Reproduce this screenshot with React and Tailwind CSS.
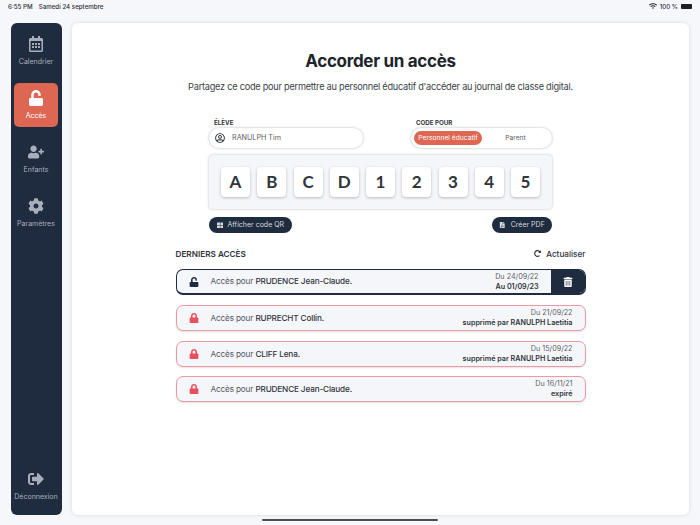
import { FaRegCalendarAlt, FaUnlock, FaUserPlus, FaCog, FaSignOutAlt, FaTrashAlt, FaRedoAlt, FaFilePdf, FaThLarge, FaLock, FaRegUserCircle, FaWifi } from 'react-icons/fa';

const navItems = [
  { label: 'Calendrier', Icon: FaRegCalendarAlt },
  { label: 'Accès', Icon: FaUnlock, active: true },
  { label: 'Enfants', Icon: FaUserPlus },
  { label: 'Paramètres', Icon: FaCog },
];

const codeChars = ['A', 'B', 'C', 'D', '1', '2', '3', '4', '5'];

const expired = [
  { name: 'RUPRECHT', first: 'Collin.', date: 'Du 21/09/22', status: 'supprimé par RANULPH Laetitia' },
  { name: 'CLIFF', first: 'Lena.', date: 'Du 15/09/22', status: 'supprimé par RANULPH Laetitia' },
  { name: 'PRUDENCE', first: 'Jean-Claude.', date: 'Du 16/11/21', status: 'expiré' },
];

const NavItem = ({ label, Icon, active }) => (
  <div className={`h-[44px] w-[44px] rounded-[5px] flex flex-col items-center justify-center ${active ? 'bg-[#dd6753] text-white' : 'text-[#a9afba]'}`}>
    <Icon className="text-[16px]" />
    <span className="mt-[5px] text-[7px] leading-[10px]">{label}</span>
  </div>
);

const App = () => {
  return (
    <div className="relative h-[525px] w-[700px] overflow-hidden bg-[#f6f7fb] font-['Inter',sans-serif] text-[#3a3f47]">
      {/* Status bar */}
      <div className="h-[13px] px-[8px] flex justify-between items-center text-[6.2px] font-medium text-[#2a2e35]">
        <div className="flex gap-[6px]">
          <span>6:55 PM</span>
          <span>Samedi 24 septembre</span>
        </div>
        <div className="flex items-center gap-[3px]">
          <FaWifi className="text-[8px]" />
          <span>100 %</span>
          <div className="h-[5px] w-[11px] rounded-[1px] bg-[#1c1f24]" />
        </div>
      </div>

      <div className="flex gap-[10px] pl-[11px] pt-[10px]">
        {/* Sidebar */}
        <aside className="h-[492px] w-[51px] rounded-[6px] bg-[#1f2c40] flex flex-col items-center justify-between pt-[6px] pb-[7px] pr-[1px]">
          <div className="flex flex-col gap-[10px]">
            {navItems.map((item) => (
              <NavItem key={item.label} {...item} />
            ))}
          </div>
          <NavItem label="Déconnexion" Icon={FaSignOutAlt} />
        </aside>

        {/* Main card */}
        <main className="h-[492px] w-[617px] rounded-[6px] bg-white shadow-[0_0_4px_rgba(0,0,0,0.12)] flex flex-col items-center">
          <h1 className="mt-[26px] text-[17px] leading-[24px] font-bold tracking-[-0.3px] text-[#20242b]">Accorder un accès</h1>
          <p className="mt-[7px] text-[9.2px] leading-[14px] tracking-[-0.25px] text-[#3a3f47]">
            Partagez ce code pour permettre au personnel éducatif d'accéder au journal de classe digital.
          </p>

          <div className="mt-[25px] w-[343px]">
            <div className="flex justify-between">
              <div className="w-[154px]">
                <div className="ml-[5px] text-[6.2px] leading-[8px] font-bold text-[#30343b]">ÉLÈVE</div>
                <div className="mt-[1px] h-[20px] rounded-full bg-white shadow-[0_0_3px_rgba(0,0,0,0.28)] flex items-center pl-[6px] gap-[7px] text-[7.2px] text-[#5c6168]">
                  <FaRegUserCircle className="text-[10px] text-[#30343b]" />
                  <span>RANULPH Tim</span>
                </div>
              </div>
              <div className="w-[141px]">
                <div className="ml-[5px] text-[6.2px] leading-[8px] font-bold text-[#30343b]">CODE POUR</div>
                <div className="mt-[1px] h-[20px] rounded-full bg-white shadow-[0_0_3px_rgba(0,0,0,0.28)] flex items-center px-[3px] text-[6.7px]">
                  <div className="h-[14px] w-[68px] rounded-full bg-[#dd6753] text-white flex items-center justify-center">Personnel éducatif</div>
                  <div className="flex-1 text-center text-[#5c6168]">Parent</div>
                </div>
              </div>
            </div>

            <div className="mt-[7px] h-[54px] rounded-[4px] bg-[#f5f6f9] shadow-[0_0_3px_rgba(0,0,0,0.25)] flex items-center justify-between px-[12px]">
              {codeChars.map((c) => (
                <div key={c} className="h-[30px] w-[29px] rounded-[4px] bg-white shadow-[0_1px_3px_rgba(0,0,0,0.25)] flex items-center justify-center font-['Lato',sans-serif] text-[17px] font-bold text-[#30343b]">
                  {c}
                </div>
              ))}
            </div>

            <div className="mt-[8px] flex justify-between">
              <button className="h-[16px] w-[83px] rounded-full bg-[#1f2c40] text-[#d5d8de] text-[7px] flex items-center justify-center gap-[4px]">
                <FaThLarge className="text-[6.5px]" />
                Afficher code QR
              </button>
              <button className="h-[16px] w-[60px] rounded-full bg-[#1f2c40] text-[#d5d8de] text-[7px] flex items-center justify-center gap-[5px]">
                <FaFilePdf className="text-[6.5px]" />
                Créer PDF
              </button>
            </div>
          </div>

          {/* Last accesses */}
          <section className="mt-[14px] w-[410px]">
            <div className="h-[14px] flex justify-between items-center">
              <h2 className="text-[8.2px] font-semibold text-[#30343b]">DERNIERS ACCÈS</h2>
              <div className="flex items-center gap-[5px] text-[8.2px] font-medium text-[#30343b]">
                <FaRedoAlt className="text-[7px]" />
                Actualiser
              </div>
            </div>

            <div className="mt-[8px] h-[26px] rounded-[7px] border border-[#1f2c40] border-b-2 bg-[#f5f6f9] flex items-center overflow-hidden">
              <FaUnlock className="ml-[12px] text-[10px] text-[#1f2c40]" />
              <span className="ml-[12px] text-[8.2px] tracking-[-0.15px] text-[#53575e]">
                Accès pour <b className="font-medium text-[#30343b]">PRUDENCE Jean-Claude.</b>
              </span>
              <div className="ml-auto mr-[12px] text-right text-[7.2px] leading-[10px]">
                <div className="text-[#5c6168]">Du 24/09/22</div>
                <div className="font-semibold text-[#30343b]">Au 01/09/23</div>
              </div>
              <div className="h-full w-[34px] bg-[#1f2c40] flex items-center justify-center text-white">
                <FaTrashAlt className="text-[10px]" />
              </div>
            </div>

            <div className="mt-[10px] flex flex-col gap-[9.7px]">
              {expired.map((row) => (
                <div key={row.name} className="h-[26px] rounded-[7px] border border-[#ec9aa2] bg-[#f5f6f9] shadow-[0_1px_2px_rgba(0,0,0,0.12)] flex items-center pr-[12px]">
                  <FaLock className="ml-[12px] text-[10px] text-[#e94f5d]" />
                  <span className="ml-[12px] text-[8.2px] tracking-[-0.15px] text-[#53575e]">
                    Accès pour <b className="font-medium text-[#30343b]">{row.name} {row.first}</b>
                  </span>
                  <div className="ml-auto text-right text-[7.2px] leading-[10px]">
                    <div className="text-[#5c6168]">{row.date}</div>
                    <div className="font-semibold text-[#30343b]">{row.status}</div>
                  </div>
                </div>
              ))}
            </div>
          </section>
        </main>
      </div>

      {/* Home indicator */}
      <div className="absolute bottom-[4px] left-[262px] h-[2px] w-[176px] rounded-full bg-[#4a4d52]" />
    </div>
  );
};

export default App;
